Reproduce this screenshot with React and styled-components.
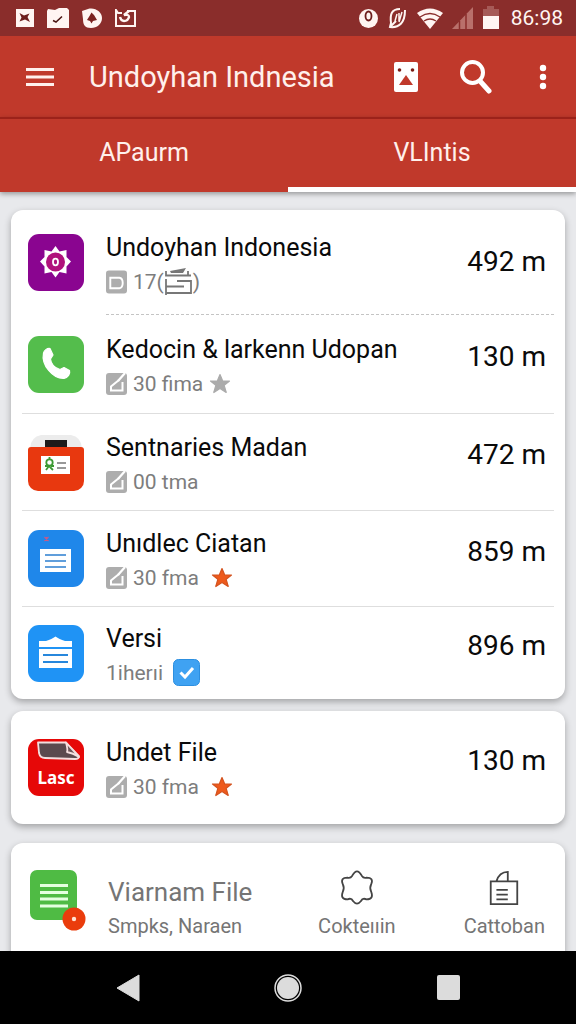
import styled, { createGlobalStyle, css } from 'styled-components'

const GlobalStyle = createGlobalStyle`
  * {
    box-sizing: border-box;
  }
  body {
    margin: 0;
    background: #e8e9ec;
    font-family: Roboto, 'Liberation Sans', 'Noto Sans CJK SC', sans-serif;
  }
`

const Screen = styled.div`
  height: 100vh;
  display: flex;
  flex-direction: column;
`
const StatusBar = styled.div`
  flex: none;
  height: 36px;
  padding: 0 13px 0 15px;
  display: flex;
  align-items: center;
  justify-content: space-between;
  background: #8a2d2b;
  color: #fff5f2;
  & svg {
    display: block;
  }
`
const StatusGroup = styled.div`
  display: flex;
  align-items: center;
  gap: ${({ $gap }) => $gap}px;
`
const Clock = styled.span`
  font-size: 21px;
  line-height: 36px;
  margin-left: 2px;
`
const AppBar = styled.header`
  flex: none;
  height: 81px;
  padding: 0 16px 0 25px;
  display: flex;
  align-items: center;
  background: #c0392b;
  color: #fff0ec;
`
const IconButton = styled.button`
  flex: none;
  display: flex;
  align-items: center;
  justify-content: center;
  width: ${({ $width }) => $width}px;
  height: 48px;
  padding: 0;
  border: 0;
  background: none;
  color: inherit;
  cursor: pointer;
`
const Title = styled.h1`
  flex: 1;
  margin: 0 0 0 34px;
  font-size: 29px;
  line-height: 40px;
  font-weight: 400;
  white-space: nowrap;
`
const Tabs = styled.nav`
  flex: none;
  display: grid;
  grid-template-columns: 1fr 1fr;
  height: 75px;
  position: relative;
  background: #c0392b;
  border-top: 2px solid #9c221a;
  box-shadow: 0 2px 5px rgba(0, 0, 0, 0.35);
`
const Tab = styled.button`
  padding: 0;
  border: 0;
  border-bottom: 5px solid ${({ $active }) => ($active ? '#fff' : 'transparent')};
  background: none;
  color: #fff0ec;
  font-family: inherit;
  font-size: 25px;
  line-height: 32px;
  cursor: pointer;
`
const Main = styled.main`
  flex: 1;
  min-height: 0;
  overflow-y: auto;
  scrollbar-width: none;
  display: flex;
  flex-direction: column;
  padding: 18px 11px 0;
`
const Card = styled.ul`
  flex: none;
  margin: 0 0 ${({ $gap }) => $gap}px;
  padding: 0 11px;
  list-style: none;
  background: #fff;
  border-radius: 12px;
  box-shadow: 0 3px 7px rgba(0, 0, 0, 0.3);
`
const Row = styled.li`
  height: ${({ $height }) => $height}px;
  display: flex;
  flex-direction: column;
  ${({ $divider }) => $divider && css`
    &::after {
      content: '';
      margin-left: ${$divider === 'inset' ? 84 : 0}px;
      border-bottom: 1px ${$divider === 'inset' ? 'dashed #c4c4c4' : 'solid #dedede'};
    }
  `}
`
const RowBody = styled.div`
  flex: 1;
  display: flex;
  align-items: center;
  padding: 0 8px 0 6px;
`
const Tile = styled.svg`
  flex: none;
  display: block;
  width: 56px;
  height: 57px;
  overflow: visible;
`
const Info = styled.div`
  flex: 1;
  min-width: 0;
  margin-left: 22px;
  padding-top: 3px;
`
const Name = styled.div`
  font-size: ${({ $muted }) => ($muted ? 26 : 25)}px;
  line-height: 36px;
  color: ${({ $muted }) => ($muted ? '#757575' : '#0a0a0a')};
  white-space: nowrap;
`
const Meta = styled.div`
  display: flex;
  align-items: center;
  gap: 6px;
  height: 32px;
  font-size: 21px;
  line-height: 32px;
  color: #7d7d7d;
  white-space: nowrap;
  & svg {
    flex: none;
  }
`
const Mark = styled.span`
  display: flex;
  align-items: center;
  margin-left: ${({ $space }) => $space}px;
`
const Amount = styled.div`
  padding-bottom: ${({ $centered }) => ($centered ? 0 : 14)}px;
  font-size: 28px;
  line-height: 32px;
  color: #0a0a0a;
  white-space: nowrap;
`
const Footer = styled.section`
  flex: none;
  display: flex;
  align-items: flex-start;
  padding: 27px 20px 24px 17px;
  background: #fff;
  border-radius: 12px;
  box-shadow: 0 3px 7px rgba(0, 0, 0, 0.3);
`
const FooterInfo = styled.div`
  flex: 1;
  min-width: 0;
  padding-top: 4px;
  margin-left: 24px;
`
const Caption = styled.div`
  font-size: 20px;
  line-height: 32px;
  color: #757575;
  white-space: nowrap;
`
const FooterAction = styled.button`
  display: flex;
  flex-direction: column;
  align-items: center;
  gap: 4px;
  margin-left: ${({ $space }) => $space}px;
  padding: 0;
  border: 0;
  background: none;
  color: #444;
  font-family: inherit;
  cursor: pointer;
`
const NavBar = styled.nav`
  flex: none;
  height: 73px;
  position: relative;
  display: flex;
  align-items: center;
  justify-content: center;
  gap: 112px;
  background: #000;
  color: #dcdcdc;
`

const NoteIcon = () => (
  <svg width="21" height="22" viewBox="0 0 21 22">
    <rect width="21" height="22" rx="3" fill="#adadad" />
    <path d="M13 7 5 13.500V17.500H16.500V9" fill="none" stroke="#fff" strokeWidth="2" />
    <path d="M12 8 19 0" stroke="#fff" strokeWidth="2.200" />
  </svg>
)
const CardIcon = () => (
  <svg width="21" height="24" viewBox="0 0 22 24">
    <rect width="22" height="24" rx="3" fill="#adadad" />
    <path d="M4.500 7.500H14Q17.500 8 17.500 13T14 18.500H4.500Z" fill="none" stroke="#fff" strokeWidth="2" />
  </svg>
)
const StackIcon = () => (
  <svg width="29" height="28" viewBox="0 0 29 28" fill="none" stroke="#777" strokeWidth="1.800">
    <path d="M6 3 22 0 19 5H7Z" fill="#777" stroke="none" />
    <path d="M2 3V7.500H27M24 3V7.500M2 11V27M2 18.500H20M13 13H27V25H2" />
  </svg>
)
const Star = ({ color, edge }) => (
  <svg width="22" height="22" viewBox="0 0 22 22">
    <path
      d="M11 1.500 13.700 8H20.500L15.200 12.300 17.200 19.500 11 15.500 4.800 19.500 6.800 12.300 1.500 8H8.300Z"
      fill={color} stroke={edge} strokeWidth="1.200" strokeLinejoin="round"
    />
  </svg>
)
const CheckMark = () => (
  <svg width="27" height="27" viewBox="0 0 27 27">
    <rect x="0.500" y="0.500" width="26" height="26" rx="5" fill="#3fa2f2" stroke="#2c8fe0" />
    <path d="M7.500 13.500 12 18 20 9" fill="none" stroke="#fff" strokeWidth="3" />
  </svg>
)

const BadgeTile = () => (
  <Tile viewBox="0 0 56 57">
    <rect width="56" height="57" rx="11" fill="#8a0590" />
    <path
      d="M27.500 12 31.500 17.500 38.500 16 38.500 23 43 27.500 38.500 32.500 38.500 39.500 31.500 38 27.500 43.500 23.500 38 16.500 39.500 16.500 32.500 12 27.500 16.500 23 16.500 16 23.500 17.500Z"
      fill="#fff"
    />
    <circle cx="27.500" cy="28" r="9.500" fill="#b0127c" />
    <ellipse cx="27.500" cy="28" rx="2.500" ry="3.300" fill="none" stroke="#fff" strokeWidth="1.800" />
  </Tile>
)
const PhoneTile = () => (
  <Tile viewBox="0 0 56 57">
    <rect width="56" height="57" rx="11" fill="#54bd4c" />
    <path
      d="M15.500 17C16 14.500 19 12 22 12.500L25 19 22.500 23C23 28 27 32 32 33.500L36 31.500 41.500 34.500C42.500 38 40 41.500 36 42.500C25 43 13 29 15.500 17Z"
      fill="#fff" stroke="#fff" strokeWidth="1.200" strokeLinejoin="round"
    />
  </Tile>
)
const CaseTile = () => (
  <Tile viewBox="0 0 56 57">
    <path d="M2 14Q3 3 13 1H43Q53 3 54 14Z" fill="#ececec" />
    <rect y="13" width="56" height="44" rx="10" fill="#e8380f" />
    <rect y="13" width="56" height="14" rx="3" fill="#e8380f" />
    <rect x="17" y="6" width="22" height="7" fill="#1d1a1a" />
    <rect x="13" y="22" width="29" height="18" fill="#fff" />
    <circle cx="21.500" cy="28.500" r="3.200" fill="none" stroke="#3c9a34" strokeWidth="1.800" />
    <path d="M21.500 23V25M18 36 21 32 25 36M17 32H20M23 32H26" fill="none" stroke="#3c9a34" strokeWidth="1.800" />
    <path d="M29 29H38M29 34H38" stroke="#777" strokeWidth="1.500" />
  </Tile>
)
const DocTile = () => (
  <Tile viewBox="0 0 56 57">
    <rect width="56" height="57" rx="11" fill="#1f87ea" />
    <path d="M16.500 7 20.500 11M20.500 7 16.500 11M18.500 7V11" stroke="#c65a8a" strokeWidth="1.200" />
    <rect x="12" y="19" width="31" height="23" fill="#fff" />
    <path d="M17 25H38M17 31H38M17 37H38" stroke="#2c7fd0" strokeWidth="1.500" />
  </Tile>
)
const BoxTile = () => (
  <Tile viewBox="0 0 56 57">
    <rect width="56" height="57" rx="11" fill="#1f93f5" />
    <path d="M11 16H18C22 15 25 13 27.500 11.500C30 13 33 15 37 16H44V22H11Z" fill="#fff" />
    <rect x="11" y="24" width="33" height="19" fill="#fff" />
    <path d="M15 30H40M15 37H40" stroke="#2787dc" strokeWidth="1.800" />
  </Tile>
)
const LastTile = () => (
  <Tile viewBox="0 0 56 57">
    <rect width="56" height="57" rx="11" fill="#e60808" />
    <path
      d="M10 3.500H38L51 17Q51 20 47 20L17 19Q12 19 11 14Z"
      fill="#5b4a4e" stroke="#f3dede" strokeWidth="1.800" strokeLinejoin="round"
    />
    <path d="M38 3.500Q40 11 39 13Q45 14 51 18Z" fill="#6c5558" stroke="#f3dede" strokeWidth="1.800" strokeLinejoin="round" />
    <text x="28" y="45" textAnchor="middle" fontFamily="'Noto Sans', sans-serif" fontWeight="700" fontSize="17" fill="#fff">Lasc</text>
  </Tile>
)
const FileTile = () => (
  <Tile viewBox="0 0 56 57">
    <rect x="2" y="0" width="47" height="50" rx="7" fill="#4fbb44" />
    <path d="M12 15.500H40M12 22.500H40M12 29H40M12 36H40" stroke="#e4ffe0" strokeWidth="2.800" />
    <circle cx="46" cy="49" r="11.500" fill="#ea3c0c" />
    <circle cx="46" cy="49" r="2.200" fill="#ffe3d4" />
  </Tile>
)

const places = [
  { id: 1, Icon: BadgeTile, name: 'Undoyhan Indonesia', amount: '492 m', height: 105, divider: 'inset', meta: 'stack' },
  { id: 2, Icon: PhoneTile, name: 'Kedocin & larkenn Udopan', amount: '130 m', height: 99, divider: 'full', meta: '30 fima', star: 'grey' },
  { id: 3, Icon: CaseTile, name: 'Sentnaries Madan', amount: '472 m', height: 97, divider: 'full', meta: '00 tma' },
  { id: 4, Icon: DocTile, name: 'Unıdlec Ciatan', amount: '859 m', height: 96, divider: 'full', meta: '30 fma', star: 'orange' },
  { id: 5, Icon: BoxTile, name: 'Versi', amount: '896 m', height: 92, meta: 'check' },
]
const files = [
  { id: 6, Icon: LastTile, name: 'Undet File', amount: '130 m', height: 113, meta: '30 fma', star: 'orange' },
]

const MetaLine = ({ meta, star }) => {
  if (meta === 'stack') {
    return <Meta><CardIcon /><Mark $space={0}>17(<StackIcon />)</Mark></Meta>
  }
  if (meta === 'check') {
    return <Meta><span>1iherıi</span><Mark $space={4}><CheckMark /></Mark></Meta>
  }
  return (
    <Meta>
      <NoteIcon />
      <span>{meta}</span>
      {star === 'grey' && <Mark $space={0}><Star color="#ababab" edge="#ababab" /></Mark>}
      {star === 'orange' && <Mark $space={6}><Star color="#ee5a1c" edge="#d4531f" /></Mark>}
    </Meta>
  )
}

const Place = ({ item }) => (
  <Row $height={item.height} $divider={item.divider}>
    <RowBody>
      <item.Icon />
      <Info>
        <Name>{item.name}</Name>
        <MetaLine meta={item.meta} star={item.star} />
      </Info>
      <Amount $centered={item.divider === 'inset'}>{item.amount}</Amount>
    </RowBody>
  </Row>
)

const Status = () => (
  <StatusBar>
    <StatusGroup $gap={13}>
      <svg width="19" height="18" viewBox="0 0 19 18">
        <rect x="1" width="18" height="18" fill="currentColor" />
        <path d="M4.500 4 9 6.500 14.500 4.500 12.500 8 15 13 10 10.500 4.500 12.500 6.500 8.500Z" fill="#6d1d1c" />
      </svg>
      <svg width="22" height="20" viewBox="0 0 22 20">
        <path d="M0 3 1 1 8 2 12 0H20L22 2V20H0Z" fill="currentColor" />
        <path d="M6 12.500 9 14 15 8.500" fill="none" stroke="#4a1513" strokeWidth="1.500" />
      </svg>
      <svg width="20" height="20" viewBox="0 0 20 20">
        <path d="M0 3 6 1C13-1 20 4 20 10S15 20 9 20 1 17 1 11Z" fill="currentColor" />
        <path d="M9.500 4.500 12 7 15 12 11 13 9.500 15.500 8 13 5 12 7.500 8Z" fill="#7c2321" />
      </svg>
      <svg width="21" height="18" viewBox="0 0 21 18" fill="none" stroke="currentColor" strokeWidth="2">
        <path d="M7 4H3L1 1V17H20V2H12" />
        <path d="M14 2 9 6Q14 5 14 8Q13 12 9 12Q6 12 5 8" strokeWidth="2.400" />
      </svg>
    </StatusGroup>
    <StatusGroup $gap={9}>
      <svg width="19" height="19" viewBox="0 0 19 19">
        <circle cx="9.500" cy="9.500" r="9.500" fill="currentColor" />
        <ellipse cx="9.500" cy="7" rx="3" ry="4.500" fill="none" stroke="#6d1d1c" strokeWidth="1.800" />
      </svg>
      <svg width="21" height="22" viewBox="0 0 21 22" fill="none" stroke="currentColor" strokeWidth="2">
        <path d="M13 2C4 2 3 8 4 16L3 20C12 21 18 16 18 3M3 20 9 14" />
        <path d="M10 7 8 14M12 6V14M15 5 12 15" strokeWidth="1.500" />
      </svg>
      <svg width="26" height="21" viewBox="0 0 26 21" fill="currentColor">
        <path d="M0 5Q13-4 26 5L13 21Z" />
        <path d="M3 9Q13 2 23 9M7 13Q13 9 19 13" fill="none" stroke="#8a2d2b" strokeWidth="1.300" />
      </svg>
      <svg width="21" height="22" viewBox="0 0 21 22">
        <path d="M0 22 21 0V22Z" fill="#b9706b" />
        <path d="M7.500 14V22M14 7V22" stroke="#8a2d2b" strokeWidth="1.500" />
      </svg>
      <svg width="18" height="24" viewBox="0 0 18 24">
        <path d="M5 0H12V3H17V11H1V3H5Z" fill="#a65a57" />
        <rect x="1" y="10" width="16" height="13" fill="currentColor" />
      </svg>
      <Clock>86:98</Clock>
    </StatusGroup>
  </StatusBar>
)

export default function App() {
  return (
    <Screen>
      <GlobalStyle />
      <Status />
      <AppBar>
        <IconButton $width={30} aria-label="Menu">
          <svg width="30" height="22" viewBox="0 0 30 22" stroke="currentColor" strokeWidth="2.800">
            <path d="M1 3.500H29M1 11H29M1 18.500H29" />
          </svg>
        </IconButton>
        <Title>Undoyhan Indnesia</Title>
        <IconButton $width={40} aria-label="Gallery">
          <svg width="24" height="30" viewBox="0 0 24 30">
            <rect width="24" height="30" rx="2" fill="#fff" />
            <circle cx="5.500" cy="8" r="1.800" fill="#7c1c14" />
            <circle cx="18.500" cy="8" r="1.800" fill="#7c1c14" />
            <path d="M12 13 19 23H5Z" fill="#c0392b" />
          </svg>
        </IconButton>
        <IconButton $width={100} aria-label="Search">
          <svg width="32" height="34" viewBox="0 0 32 34" fill="none" stroke="#fff">
            <circle cx="12.500" cy="12.500" r="10.500" strokeWidth="4" />
            <path d="M20 21 29 31" strokeWidth="5" strokeLinecap="round" />
          </svg>
        </IconButton>
        <IconButton $width={34} aria-label="More options">
          <svg width="8" height="26" viewBox="0 0 8 26" fill="#fff">
            <circle cx="4" cy="4" r="3.200" />
            <circle cx="4" cy="13" r="3.200" />
            <circle cx="4" cy="22" r="3.200" />
          </svg>
        </IconButton>
      </AppBar>
      <Tabs>
        <Tab>APaurm</Tab>
        <Tab $active>VLIntis</Tab>
      </Tabs>
      <Main>
        <Card $gap={12}>
          {places.map((item) => <Place key={item.id} item={item} />)}
        </Card>
        <Card $gap={19}>
          {files.map((item) => <Place key={item.id} item={item} />)}
        </Card>
        <Footer>
          <FileTile />
          <FooterInfo>
            <Name $muted>Viarnam File</Name>
            <Caption>Smpks, Naraen</Caption>
          </FooterInfo>
          <FooterAction $space={0}>
            <svg width="36" height="36" viewBox="0 0 36 38" fill="none" stroke="currentColor" strokeWidth="1.900">
              <path d="M13 6Q18-3 23 6Q25 9 28 8Q36 8 33 15Q31 19 33 23Q36 31 28 31Q24 29 22 33Q18 38 14 33Q12 29 8 31Q0 31 3 23Q5 19 3 15Q0 8 8 8Q11 9 13 6Z" />
            </svg>
            <Caption as="span">Cokteııin</Caption>
          </FooterAction>
          <FooterAction $space={68}>
            <svg width="32" height="36" viewBox="0 0 32 38" fill="none" stroke="currentColor" strokeWidth="1.900">
              <path d="M2 12H30V36H2ZM8 12Q11 2 20 2V12M8 21H20M8 26H20M8 31H20" />
            </svg>
            <Caption as="span">Cattoban</Caption>
          </FooterAction>
        </Footer>
      </Main>
      <NavBar>
        <IconButton $width={48} aria-label="Back">
          <svg width="24" height="28" viewBox="0 0 24 28">
            <path d="M23 1V27L1 14Z" fill="currentColor" stroke="currentColor" strokeLinejoin="round" />
          </svg>
        </IconButton>
        <IconButton $width={48} aria-label="Home">
          <svg width="28" height="28" viewBox="0 0 28 28">
            <circle cx="14" cy="14" r="13" fill="none" stroke="currentColor" strokeWidth="1.500" />
            <circle cx="14" cy="14" r="11" fill="currentColor" />
          </svg>
        </IconButton>
        <IconButton $width={48} aria-label="Recent apps">
          <svg width="23" height="25" viewBox="0 0 23 25">
            <rect width="23" height="25" rx="2" fill="currentColor" />
          </svg>
        </IconButton>
      </NavBar>
    </Screen>
  )
}
